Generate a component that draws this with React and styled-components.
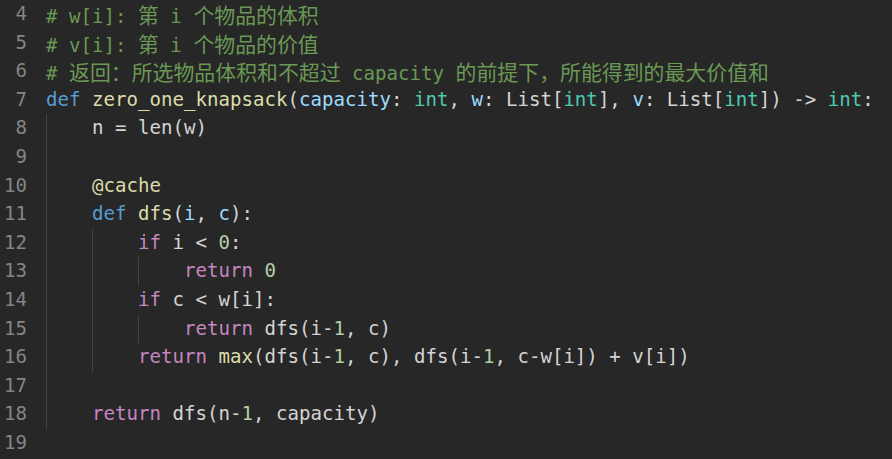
import styled, { createGlobalStyle } from "styled-components"

const Global = createGlobalStyle`
  html, body {
    margin: 0;
    padding: 0;
    background: #272727;
  }
`

const Editor = styled.div`
  width: 892px;
  height: 459px;
  overflow: hidden;
  background: #272727;
  font-family: "DejaVu Sans Mono", "Liberation Mono", "Noto Sans CJK SC", monospace;
  font-size: 19.1px;
  color: #d4d4d4;
`

const Line = styled.div`
  display: flex;
  height: 28.6px;
  line-height: 28.6px;
  white-space: pre;
`

const LineNo = styled.span`
  width: 27px;
  flex: none;
  text-align: right;
  color: #858585;
  margin-right: 19px;
`

const Indent = styled.span`
  width: 46px;
  flex: none;
  box-sizing: border-box;
  border-left: 1px solid ${p => (p.$guide ? "#444444" : "transparent")};
`

const Code = styled.span`
  display: flex;
`

const Tok = styled.span`
  color: ${p => p.$c};
`

const Cjk = styled.span`
  font-family: "Noto Sans CJK SC", sans-serif;
  font-size: 20.9px;
`

const C = {
  comment: "#6a9955",
  kw: "#569cd6",
  fn: "#dcdcaa",
  param: "#9cdcfe",
  type: "#4ec9b0",
  ctrl: "#c586c0",
  num: "#b5cea8",
  text: "#d4d4d4",
}

const Comment = ({ text }) => {
  const parts = text.split(/([\u3000-\u9fff\uff00-\uffef]+)/).filter(Boolean)
  return (
    <Tok $c={C.comment}>
      {parts.map((p, i) =>
        /[\u3000-\u9fff\uff00-\uffef]/.test(p) ? <Cjk key={i}>{p}</Cjk> : p
      )}
    </Tok>
  )
}

const t = (s, c = "text") => [s, c]

const lines = [
  { n: 4, comment: "# w[i]: 第 i 个物品的体积" },
  { n: 5, comment: "# v[i]: 第 i 个物品的价值" },
  { n: 6, comment: "# 返回：所选物品体积和不超过 capacity 的前提下，所能得到的最大价值和" },
  {
    n: 7,
    toks: [
      t("def", "kw"), t(" "), t("zero_one_knapsack", "fn"), t("("), t("capacity", "param"),
      t(": "), t("int", "type"), t(", "), t("w", "param"), t(": List["), t("int", "type"),
      t("], "), t("v", "param"), t(": List["), t("int", "type"), t("]) -> "), t("int", "type"), t(":"),
    ],
  },
  { n: 8, indent: 1, toks: [t("n = len(w)")] },
  { n: 9, indent: 1, toks: [] },
  { n: 10, indent: 1, toks: [t("@cache", "fn")] },
  { n: 11, indent: 1, toks: [t("def", "kw"), t(" "), t("dfs", "fn"), t("("), t("i", "param"), t(", "), t("c", "param"), t("):")] },
  { n: 12, indent: 2, toks: [t("if", "ctrl"), t(" i < "), t("0", "num"), t(":")] },
  { n: 13, indent: 3, toks: [t("return", "ctrl"), t(" "), t("0", "num")] },
  { n: 14, indent: 2, toks: [t("if", "ctrl"), t(" c < w[i]:")] },
  { n: 15, indent: 3, toks: [t("return", "ctrl"), t(" dfs(i-"), t("1", "num"), t(", c)")] },
  {
    n: 16,
    indent: 2,
    toks: [
      t("return", "ctrl"), t(" "), t("max", "fn"), t("(dfs(i-"), t("1", "num"), t(", c), dfs(i-"),
      t("1", "num"), t(", c-w[i]) + v[i])"),
    ],
  },
  { n: 17, indent: 1, toks: [] },
  { n: 18, indent: 1, toks: [t("return", "ctrl"), t(" dfs(n-"), t("1", "num"), t(", capacity)")] },
  { n: 19, indent: 0, toks: [] },
]

const App = () => (
  <>
    <Global />
    <Editor>
      {lines.map(l => (
        <Line key={l.n}>
          <LineNo>{l.n}</LineNo>
          <Code>
            {Array.from({ length: l.indent || 0 }, (_, i) => (
              <Indent key={i} $guide />
            ))}
            {l.comment ? (
              <Comment text={l.comment} />
            ) : (
              l.toks.map(([s, c], i) => (
                <Tok key={i} $c={C[c]}>{s}</Tok>
              ))
            )}
          </Code>
        </Line>
      ))}
    </Editor>
  </>
)

export default App
